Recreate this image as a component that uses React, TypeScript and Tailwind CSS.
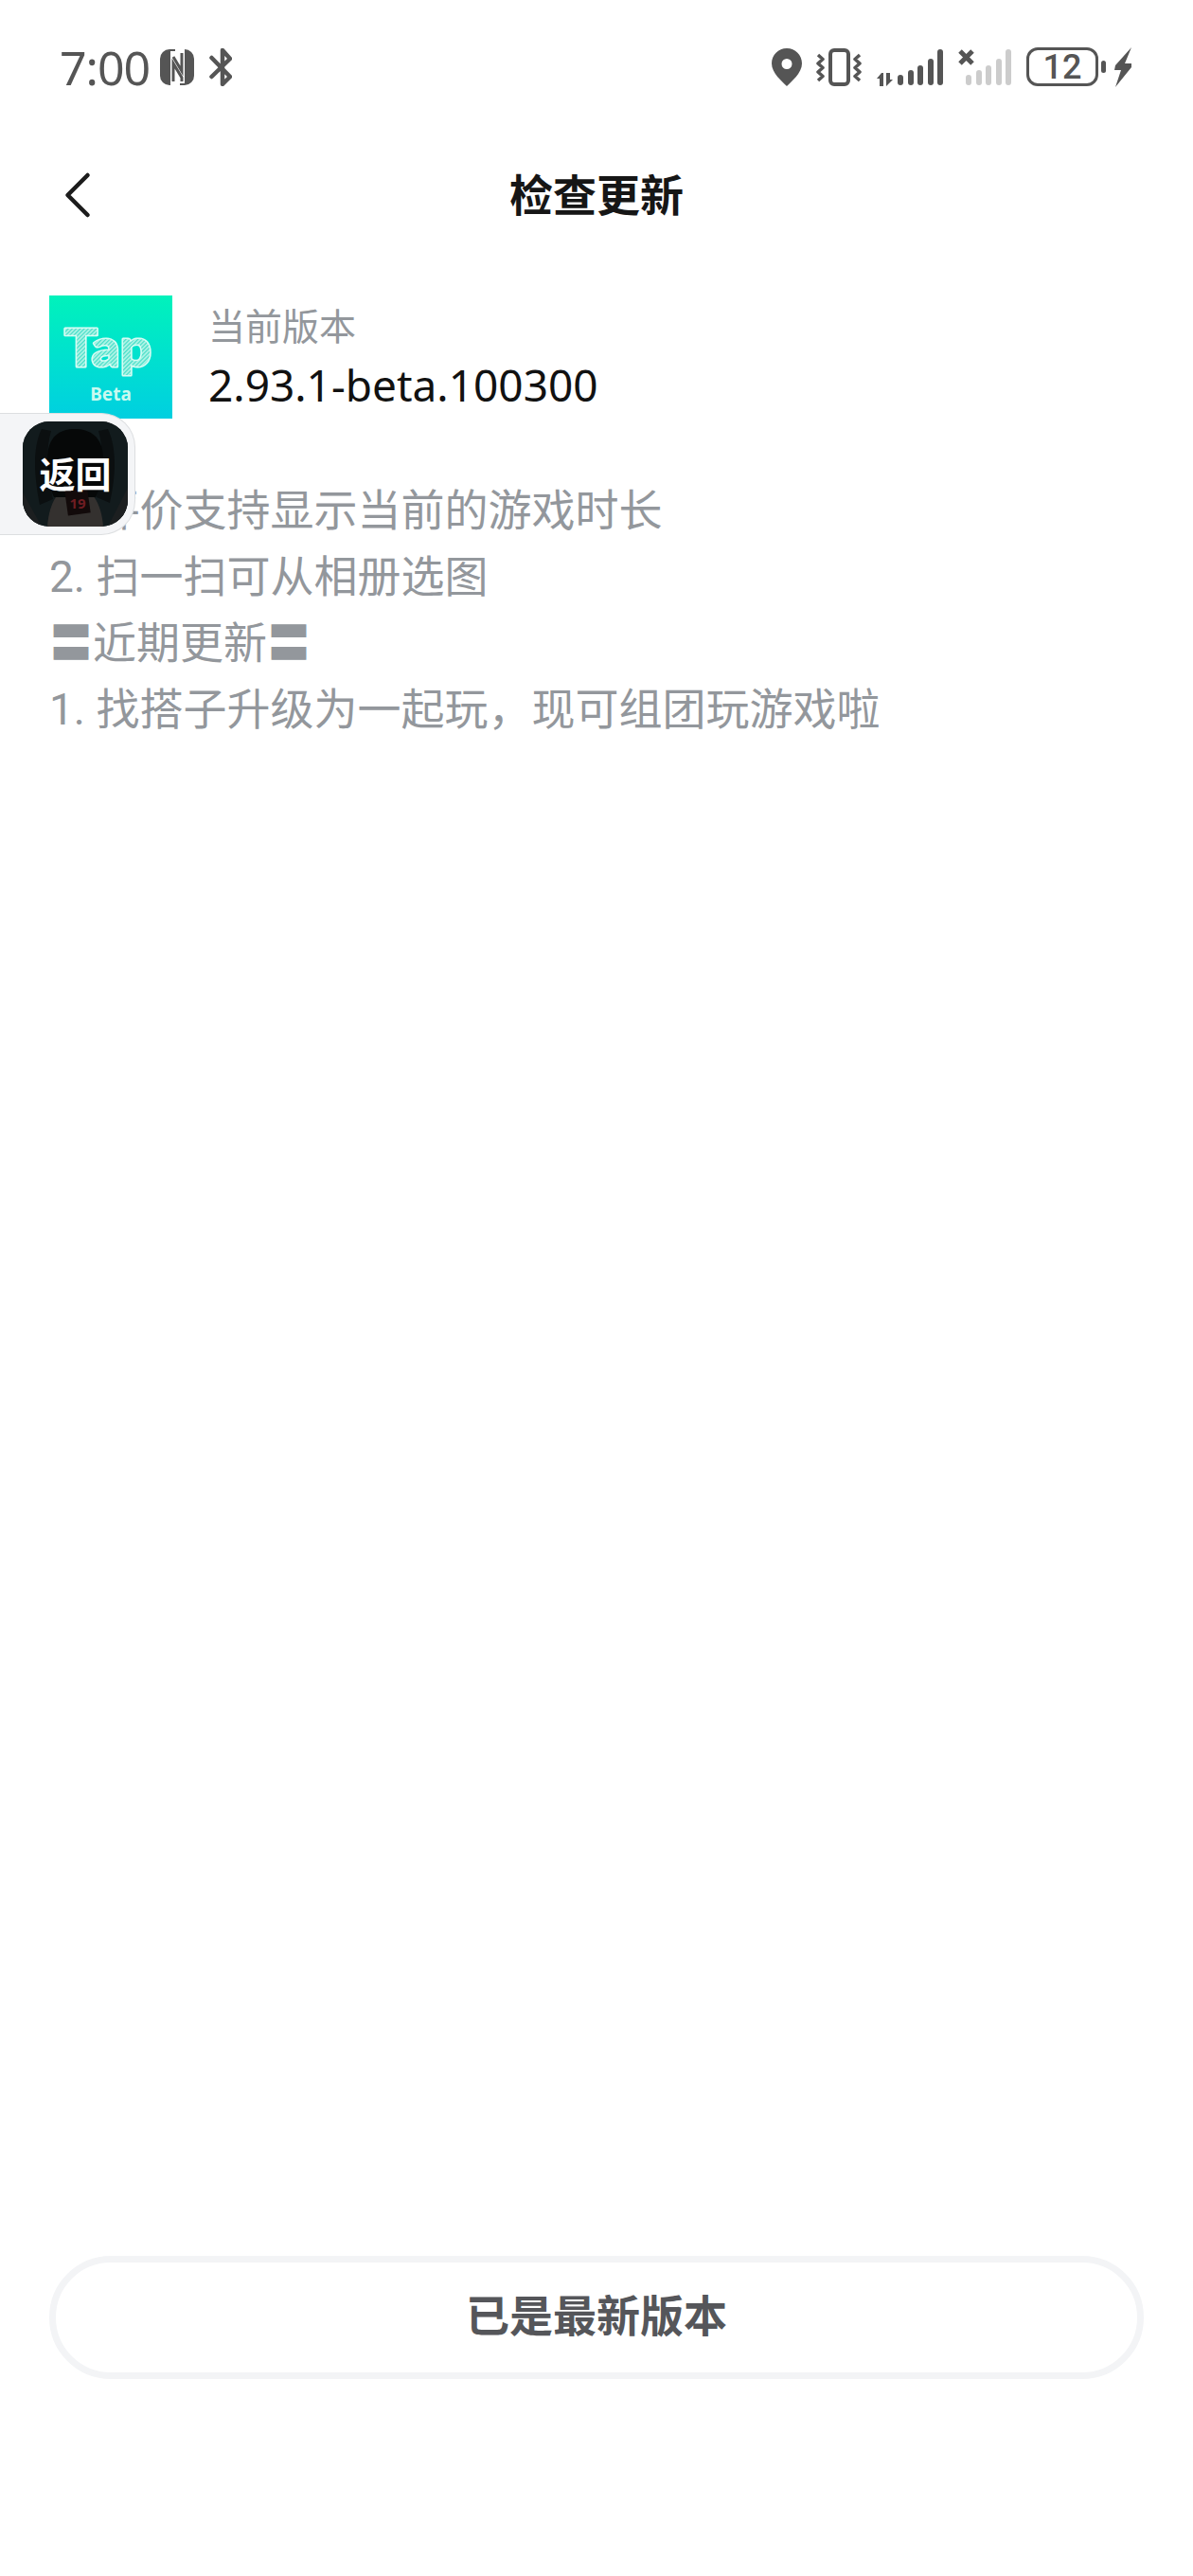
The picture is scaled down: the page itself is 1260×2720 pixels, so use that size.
import { ChevronLeft } from "lucide-react";

const font = { fontFamily: '"Noto Sans", "Noto Sans CJK SC", sans-serif' };
const bodyFont = { fontFamily: 'Roboto, "Noto Sans CJK SC", sans-serif' };

const notes = [
  "1. 评价支持显示当前的游戏时长",
  "2. 扫一扫可从相册选图",
  "〓近期更新〓",
  "1. 找搭子升级为一起玩，现可组团玩游戏啦",
];

function NfcIcon() {
  return (
    <svg width="36" height="38" viewBox="0 0 36 38">
      <rect width="36" height="38" rx="10" fill="#555" />
      <rect x="11" width="15" height="38" fill="#fff" />
      <path d="M11 0h5v2h-5zM21 36h5v2h-5z" fill="#555" />
      <path d="M14 8l9 15V4" fill="none" stroke="#555" strokeWidth="3" />
      <path d="M14 34V15l9 15v4" fill="none" stroke="#555" strokeWidth="3" />
    </svg>
  );
}

function BluetoothIcon() {
  return (
    <svg width="24" height="40" viewBox="0 0 24 40" fill="none" stroke="#555" strokeWidth="4.500" strokeLinecap="round" strokeLinejoin="round">
      <path d="M2.500 10 22 30l-8 8V2l8 9L2.500 30" />
    </svg>
  );
}

function PinIcon() {
  return (
    <svg width="32" height="40" viewBox="0 0 32 40">
      <path fillRule="evenodd" d="M16 0C7 0 0 7 0 16c0 10 11 19 16 24 5-5 16-14 16-24C32 7 25 0 16 0zm0 11a5.500 5.500 0 1 1 0 11 5.500 5.500 0 0 1 0-11z" fill="#555" />
    </svg>
  );
}

function VibrateIcon() {
  return (
    <svg width="48" height="40" viewBox="0 0 48 40" fill="none" stroke="#555" strokeWidth="3.500" strokeLinejoin="round">
      <rect x="15" y="2" width="19" height="36" rx="4" strokeWidth="4" />
      <path d="M2 7l5 4.500-5 4.500 5 4.500-5 4.500 5 4.500-5 4.500M46 7l-5 4.500 5 4.500-5 4.500 5 4.500-5 4.500 5 4.500" />
    </svg>
  );
}

function SignalBars({ color }: { color: string }) {
  const heights = [11, 16, 21, 28, 38];
  return (
    <div className="flex items-end gap-[4.500px]">
      {heights.map((h) => (
        <div key={h} className="w-[6px] rounded-full" style={{ height: h, backgroundColor: color }} />
      ))}
    </div>
  );
}

function StatusBar() {
  return (
    <div className="flex h-[142px] items-center justify-between pb-[1px] pl-[63px] pr-[65px]">
      <div className="flex items-center">
        <span className="text-[50px] leading-none tracking-[-1px] text-[#555]" style={font}>7:00</span>
        <div className="ml-[11px]"><NfcIcon /></div>
        <div className="ml-[16px]"><BluetoothIcon /></div>
      </div>
      <div className="flex items-center">
        <PinIcon />
        <div className="ml-[15px]"><VibrateIcon /></div>
        {/* data arrows next to the SIM 1 bars */}
        <svg className="ml-[16px] mt-[26px]" width="17" height="14" viewBox="0 0 17 14" fill="#555">
          <path d="M5 0 0 6h3v8h4V0zM10 0v14l7-7h-3V0z" />
        </svg>
        <div className="ml-[5px] mt-[1px]"><SignalBars color="#555" /></div>
        <div className="relative ml-[24px] mt-[1px]">
          <SignalBars color="#ccc" />
          <svg className="absolute left-[-8px] top-[0px]" width="17" height="17" viewBox="0 0 17 17" stroke="#555" strokeWidth="5">
            <path d="M2 2l13 13M15 2L2 15" />
          </svg>
        </div>
        <div className="ml-[16px] flex h-[41px] w-[76px] items-center justify-center rounded-[12px] border-[3px] border-[#555]">
          <span className="text-[36px] font-medium leading-none text-[#555]" style={bodyFont}>12</span>
        </div>
        <div className="ml-[3px] h-[13px] w-[5px] rounded-full bg-[#555]" />
        <svg className="ml-[9px]" width="18" height="42" viewBox="0 0 18 42" fill="#555">
          <path d="M18 0 1 19l-1 5h7L1 42l17-21v-4h-7z" />
        </svg>
      </div>
    </div>
  );
}

function TapBetaIcon() {
  const logo = {
    x: 3,
    y: 42,
    fontFamily: "Lato, sans-serif",
    fontWeight: 900,
    fontSize: 56,
    textLength: 92,
    lengthAdjust: "spacingAndGlyphs" as const,
    strokeLinejoin: "round" as const,
  };
  return (
    <div className="flex h-[130px] w-[130px] shrink-0 flex-col items-center bg-gradient-to-b from-[#02f2bb] to-[#02cfe0]">
      <svg width="104" height="58" viewBox="0 0 104 58" className="mt-[33px]">
        <defs>
          <pattern id="hatch" width="3" height="3" patternUnits="userSpaceOnUse" patternTransform="rotate(45)">
            <rect width="3" height="3" fill="#a8f3e4" />
            <rect width="1" height="3" fill="#3fdcc6" />
          </pattern>
        </defs>
        <text {...logo} fill="#d8fcf4" stroke="#d8fcf4" strokeWidth="3">Tap</text>
        <text {...logo} fill="url(#hatch)">Tap</text>
      </svg>
      <span className="mt-[3px] text-[19px] font-bold leading-[20px] text-[#c9faf0]" style={font}>Beta</span>
    </div>
  );
}

function GameIcon() {
  return (
    <div className="relative flex h-[111px] w-[111px] items-center justify-center overflow-hidden rounded-[28px] bg-[#11181a]">
      {/* dark portrait behind the label */}
      <svg className="absolute inset-0" width="111" height="111" viewBox="0 0 111 111">
        <rect width="111" height="111" fill="#121b1d" />
        <path d="M0 75l20 36H0zM111 70 90 111h21z" fill="#1c1f20" />
        <path d="M26 111c2-26 12-42 29-42s28 16 30 42z" fill="#34312f" />
        <path d="M20 8c-10 20-8 50-2 80l14-6C26 55 24 30 30 10zM90 8c10 22 8 50 2 78l-14-6c6-25 8-50 2-70z" fill="#0b0f10" />
        <path d="M26 40C26 15 40 8 55 8s30 7 30 32c0 20-4 32-8 40H33c-4-8-7-20-7-40z" fill="#060808" />
        <rect x="46" y="72" width="24" height="26" fill="#120a0a" transform="rotate(-8 58 85)" />
        <text x="58" y="92" textAnchor="middle" fontSize="15" fontWeight="700" fill="#6e1d22" fontFamily="Noto Sans, sans-serif">19</text>
      </svg>
      <span className="relative pb-[2px] text-[38px] font-bold leading-none text-white" style={font}>返回</span>
    </div>
  );
}

export default function App() {
  return (
    <div className="relative flex h-[2720px] w-[1260px] flex-col overflow-hidden bg-white" style={font}>
      <StatusBar />

      <div className="relative flex h-[128px] items-center justify-center pb-[3px]">
        <ChevronLeft className="absolute left-[40px] top-[22px]" size={84} strokeWidth={1.3} color="#1c1c1c" />
        <h1 className="text-[46px] font-bold leading-none text-[#161616]">检查更新</h1>
      </div>

      <div className="mt-[42px] flex px-[52px]">
        <TapBetaIcon />
        <div className="ml-[38px] flex flex-col">
          <span className="mt-[7px] text-[39px] leading-[50px] text-[#93979c]">当前版本</span>
          <span className="mt-[12px] text-[46px] leading-[50px] text-[#111]">2.93.1-beta.100300</span>
        </div>
      </div>

      <div className="mt-[62px] flex flex-col px-[52px] text-[46px] leading-[70px] text-[#93979c]" style={bodyFont}>
        {notes.map((line) => (
          <p key={line}>{line}</p>
        ))}
      </div>

      <button className="mx-[52px] mb-[208px] mt-auto h-[130px] rounded-full border-[7px] border-[#f3f4f6] bg-white pb-[6px] text-[46px] font-bold text-[#55565a]">
        已是最新版本
      </button>

      {/* floating return bubble from the previous app */}
      <div className="absolute left-0 top-[436px] flex h-[129px] w-[143px] items-center justify-end rounded-r-[36px] border border-l-0 border-[#dcdee0] bg-[#f4f5f7] pr-[7px]">
        <GameIcon />
      </div>
    </div>
  );
}
